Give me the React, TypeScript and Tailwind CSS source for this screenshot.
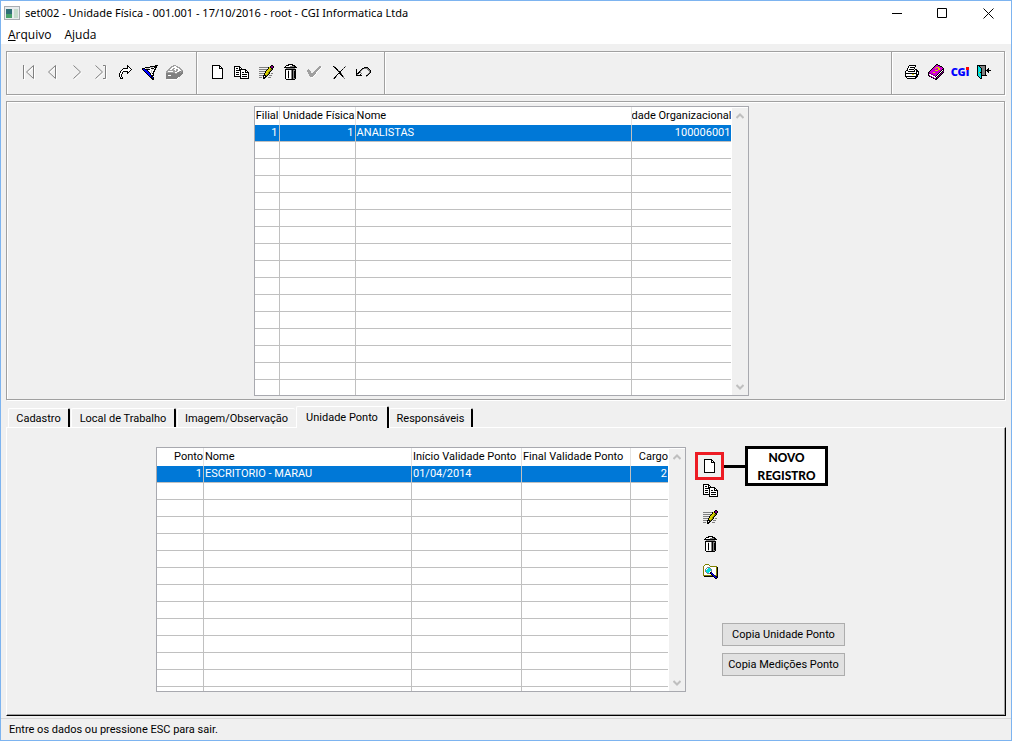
import { useState, type ReactNode } from "react";

const PALETTE: Record<string, string> = {
  k: "#000000",
  w: "#ffffff",
  g: "#808080",
  s: "#a0a0a0",
  l: "#c0c0c0",
  y: "#d8d000",
  o: "#808000",
  p: "#800080",
  m: "#d000d0",
  b: "#0000ff",
  n: "#000080",
  c: "#00e0e0",
  r: "#ff0000",
};

// 1 character = 1 pixel, "." is transparent
const NEW_DOC = [
  "kkkkkkkk...",
  "kwwwwwwkk..",
  "kwwwwwwkwk.",
  "kwwwwwwkkkk",
  "kwwwwwwwwwk",
  "kwwwwwwwwwk",
  "kwwwwwwwwwk",
  "kwwwwwwwwwk",
  "kwwwwwwwwwk",
  "kwwwwwwwwwk",
  "kwwwwwwwwwk",
  "kwwwwwwwwwk",
  "kwwwwwwwwwk",
  "kkkkkkkkkkk",
];

const COPY = [
  "kkkkkk.........",
  "kwwwwkk........",
  "kwkkwkwk.......",
  "kwwwwkkkkkkk...",
  "kwkkkkkwwwwkk..",
  "kwwwwwkwwwwkwk.",
  "kwkkkwkwkkwkkkk",
  "kwwwwwkwwwwwwwk",
  "kwkkkwkwkkkkkwk",
  "kwwwwwkwwwwwwwk",
  "kkkkkkkwkkkkkwk",
  "......kwwwwwwwk",
  "......kkkkkkkkk",
];

const PENCIL = [
  "............kk.",
  "...........kppk",
  "gggggggggkykppk",
  ".........kyykk.",
  "ggggggggkyyook.",
  ".......kyyyok..",
  "ggggggkyyyok...",
  "......kyyok....",
  "gggggkyyyok.gg.",
  ".....kyyok.....",
  "ggggkkkok.ggg..",
  "....kwkk.......",
  "ggg.kkk..ggg...",
  "....kk.........",
];

const TRASH = [
  "....kkkkk....",
  "..kkkwwwkkk..",
  ".kwwwwggggkk.",
  "kkkkkkkkkkkkk",
  "..ggggggggg..",
  ".kkkkkkkkkkk.",
  ".kwwlwwgkggk.",
  ".kwwkwwgkgkk.",
  ".kwwkwwgkgkk.",
  ".kwwkwwgkgkk.",
  ".kwwkwwgkgkk.",
  ".kwwkwwgkgkk.",
  ".kwwkwwgkgkk.",
  ".kwwkwwgkgkk.",
  ".kwwlwwgkggk.",
  "..kkkkkkkkk..",
];

const CHECK = [
  "............ss.",
  "...........sssw",
  "..........sssw.",
  ".s.......sssw..",
  "sss.....sssw...",
  "ssss...sssw....",
  ".sss..sssw.....",
  ".ssssssssw.....",
  "..ssssssw......",
  "..sssssw.......",
  "...sssw........",
  "....ww.........",
];

const CROSS = [
  "kg..........g",
  ".kk........k.",
  "..kk......g..",
  "...kk....k...",
  "....kg..k....",
  ".....kkk.....",
  "......kk.....",
  ".....kkkg....",
  "....k..kk....",
  "...k....kk...",
  "..kg.....kg..",
  ".kk.......g..",
  "gk.........g.",
];

const UNDO = [
  "........kkkk...",
  "......kkggggk..",
  "k....kg....ggk.",
  "k...kg......ggk",
  "k..kg........gk",
  "k.kkg........gk",
  "kkk..g......gk.",
  "kg..k......gk..",
  "kkkkkk....kk...",
  "..........g....",
];

const REDO = [
  "........k....",
  "........kk...",
  "........kwk..",
  "....kkkkkwwk.",
  "...kwwwwwwwwk",
  "..kwwwwwwwwk.",
  ".kwwkkkkkwk..",
  ".kwk....kk...",
  "kwwk....k....",
  "kwk..........",
  "kwk..........",
  "kwk..........",
  ".kwk.........",
  ".kkk.........",
];

const FUNNEL = [
  ".............kkk",
  "........kkkkkkk.",
  "...kkkkklllwkkk.",
  "kkkwlllwwkkkwk..",
  "kbbkkkkkwwlwkk..",
  ".kbbbkwwwlwwk...",
  "..kbbbkwwlwkk...",
  "...kbbbkwlwk....",
  "....kbbbkwkk....",
  ".....kbbkwwk....",
  "......kbbkkk....",
  ".......kbkk.....",
  "........kkbk....",
  ".........kkk....",
  "..........kk....",
];

const BOX = [
  ".......sss.......",
  ".....ssswwss.....",
  "....sswwwwwsss...",
  "...sswwsswwwwss..",
  "..sswwsswwsswwss.",
  ".sssssssswsswwwss",
  "sswwwwwsssswwsgsg",
  "ssssssssswwsggsgg",
  "gggggggggssgggggg",
  "gggggggggggggggg.",
  "ggwwwgggggggggg..",
  "gggggggggggggg...",
  "ggggggggggggw....",
  "gggggggggggw.....",
  ".wwwwwwwwww......",
];

const PRINTER = [
  "....kkkkkkk...",
  "...kwwwwwwk...",
  "...kwkkkkk....",
  "..kwwwwwwk....",
  "..kwkkkkk.kk..",
  ".kkwwwwwwkwkk.",
  "kwwkkkkkkkwkkk",
  "kwwwwwwwwwwkwk",
  "kkkkkkkkkkkkwk",
  "kwwwwwwyywwkkk",
  "kwwwwwwwwwwkk.",
  "kkkkkkkkkkkkk.",
  ".kwwwwwwwwkk..",
  "..kkkkkkkkk...",
];

const BOOK = [
  "........kk......",
  ".......kmmkk....",
  "......kmmmmmkk..",
  ".....kmmyyymmmk.",
  "....kmmymmyymmmk",
  "...kmmmmmmyymmkk",
  "..kmmmmyyymmmkwk",
  ".kmmmmmmmmmmkwkp",
  "kpmmmyymmmmkwkpk",
  "kppmmmmmmmkwkpk.",
  "kwwppmmmmkwkpk..",
  "kpwwwppmkwkpk...",
  ".kppwwwkwkpk....",
  "...kppwwkpk.....",
  ".....kppkk......",
  ".......kk.......",
];

const DOOR = [
  "kkkkkkkkk......",
  "kckgggggk......",
  "kcckggggk......",
  "kccckgggk..k...",
  "kccckgggk.kk...",
  "kccckgggkkkkkk.",
  "kccckgggk.kk...",
  "kcykkgggk..k...",
  "kccckgggk......",
  "kccckgggk......",
  "kccckkkkkk.....",
  ".kcck..........",
  "..kck..........",
  "...kk..........",
];

const SEARCH = [
  "..oooo.........",
  ".owwwwo........",
  "owwwwwwooooooo.",
  "owwwgggwwwwwwok",
  "owwgwccgwwwwwok",
  "owgwccccgwwwwok",
  "owgcccccgwwwwok",
  "owgccccwgwwwwok",
  "owwgccwknwwwwok",
  "owwwgggkbnwwwok",
  "owwwwwwwkbnwwok",
  "oooooooookbnook",
  ".kkkkkkkkkkbnkk",
  "...........kbnk",
  "............kk.",
];

const TABS = [
  { label: "Cadastro", width: "w-[62px]" },
  { label: "Local de Trabalho", width: "w-[105px]" },
  { label: "Imagem/Observação", width: "w-[118px]" },
  { label: "Unidade Ponto", width: "w-[93px]" },
  { label: "Responsáveis", width: "w-[84px]" },
];

type Column = { label: string; width: string; right?: boolean };

const UNIT_COLUMNS: Column[] = [
  { label: "Filial", width: "w-[25px]", right: true },
  { label: "Unidade Física", width: "w-[76px]", right: true },
  { label: "Nome", width: "w-[276px]" },
  { label: "dade Organizacional", width: "w-[99px]", right: true },
];

const POINT_COLUMNS: Column[] = [
  { label: "Ponto", width: "w-[47px]", right: true },
  { label: "Nome", width: "w-[208px]" },
  { label: "Início Validade Ponto", width: "w-[110px]" },
  { label: "Final Validade Ponto", width: "w-[109px]" },
  { label: "Cargo", width: "w-[37px]", right: true },
];

function Bitmap({ rows }: { rows: string[] }) {
  const width = Math.max(...rows.map((row) => row.length));
  return (
    <svg width={width} height={rows.length} viewBox={`0 0 ${width} ${rows.length}`} shapeRendering="crispEdges" aria-hidden="true">
      {rows.flatMap((row, y) =>
        row.split("").map((char, x) =>
          char === "." ? null : <rect key={`${x}-${y}`} x={x} y={y} width="1" height="1" fill={PALETTE[char]} />,
        ),
      )}
    </svg>
  );
}

// Disabled arrows: grey stroke with a white stroke one pixel away
function Arrow({ d, width }: { d: string; width: number }) {
  return (
    <svg width={width} height="16" viewBox={`0 0 ${width} 16`} fill="none" aria-hidden="true">
      <path d={d} stroke="#fff" transform="translate(1 1)" />
      <path d={d} stroke="#808080" />
    </svg>
  );
}

function ToolButton({ label, children }: { label: string; children: ReactNode }) {
  return (
    <button type="button" aria-label={label} className="flex h-6 min-w-6 items-center justify-center">
      {children}
    </button>
  );
}

function Grid({ name, columns, values, rowCount, className }: {
  name: string;
  columns: Column[];
  values: string[];
  rowCount: number;
  className: string;
}) {
  return (
    <div className={`flex shrink-0 overflow-hidden border border-[#a8a9af] bg-white ${className}`}>
      <table aria-label={name} className="table-fixed border-separate border-spacing-0 self-start">
        <thead>
          <tr>
            {columns.map((col, i) => (
              <th
                key={col.label}
                className={`h-[18px] overflow-hidden p-0 font-normal leading-[18px] whitespace-nowrap ${col.width} ${col.right ? "text-right" : "pl-px text-left"} ${i < columns.length - 1 ? "border-r border-[#e3e3e3]" : ""}`}
              >
                {col.label}
              </th>
            ))}
          </tr>
        </thead>
        <tbody>
          {Array.from({ length: rowCount }, (_, r) => (
            <tr key={r} className={r === 0 ? "bg-[#0078d7] text-white" : ""}>
              {columns.map((col, i) => (
                <td
                  key={col.label}
                  className={`h-[17px] border-b border-[#c0c0c0] p-0 leading-4 whitespace-nowrap ${col.right ? "pr-px text-right" : "pl-px"} ${i < columns.length - 1 ? "border-r" : ""}`}
                >
                  {r === 0 ? values[i] : ""}
                </td>
              ))}
            </tr>
          ))}
        </tbody>
      </table>
      <div className="mt-px ml-px flex w-4 flex-col items-center justify-between bg-[#f0f0f0] py-1">
        <button type="button" aria-label="Rolar para cima">
          <svg width="8" height="8" viewBox="0 0 8 8" fill="none" stroke="#bfbfbf" strokeWidth="2">
            <path d="M.5 6L4 2.5l3.5 3.5" />
          </svg>
        </button>
        <button type="button" aria-label="Rolar para baixo">
          <svg width="8" height="8" viewBox="0 0 8 8" fill="none" stroke="#bfbfbf" strokeWidth="2">
            <path d="M.5 2L4 5.5 7.5 2" />
          </svg>
        </button>
      </div>
    </div>
  );
}

export default function App() {
  const [tab, setTab] = useState(3);

  const etched = "border border-[#a0a0a0] shadow-[inset_1px_1px_#fff,1px_1px_#fff]";
  const pushButton = "h-[23px] w-[123px] border border-[#adadad] bg-[#e1e1e1] pt-[2px] whitespace-nowrap";

  return (
    <div className="flex min-h-screen flex-col border border-[#7db4f0] bg-[#f0f0f0] font-[Roboto,sans-serif] text-[11px] text-black">
      <header className="bg-white font-['Open_Sans',sans-serif] text-[12px]">
        <div className="flex h-6 items-center pl-[3px]">
          <svg width="16" height="14" viewBox="0 0 16 14" aria-hidden="true">
            <path d="M0 0h16v14H0z" fill="#a8adb2" />
            <path d="M1 1h14v12H1z" fill="#e8ecee" />
            <path d="M2 3h6v9H2z" fill="#2f6f78" />
            <path d="M2 8h6v4H2z" fill="#46a06a" />
            <path d="M10 3h4v9h-4z" fill="#c4dccc" />
          </svg>
          <h1 className="ml-[5px] flex-1 font-['Noto_Sans',sans-serif] text-[11px] whitespace-nowrap">
            set002 - Unidade Física - 001.001 - 17/10/2016 - root - CGI Informatica Ltda
          </h1>
          <div className="flex">
            <button type="button" aria-label="Minimizar" className="flex h-6 w-[45px] items-center justify-center">
              <svg width="11" height="11" viewBox="0 0 11 11" stroke="#000">
                <path d="M0 5.5h10" />
              </svg>
            </button>
            <button type="button" aria-label="Maximizar" className="flex h-6 w-[45px] items-center justify-center">
              <svg width="11" height="11" viewBox="0 0 11 11" stroke="#000" fill="none">
                <path d="M.5.5h9v9h-9z" />
              </svg>
            </button>
            <button type="button" aria-label="Fechar" className="flex h-6 w-[46px] items-center justify-center">
              <svg width="11" height="11" viewBox="0 0 11 11" stroke="#000">
                <path d="M.5.5l10 10M10.5.5l-10 10" />
              </svg>
            </button>
          </div>
        </div>
        <nav className="flex h-[19px] items-center gap-[13px] pl-[7px]">
          <button type="button"><u>A</u>rquivo</button>
          <button type="button">Ajuda</button>
        </nav>
      </header>

      <main className="flex flex-1 flex-col px-[5px] pt-[7px]">
        <div className={`mr-px flex h-11 items-stretch ${etched}`}>
          <div className="flex w-[190px] items-center border-r border-[#a0a0a0] pb-[2px] pl-[9px]">
            <div className="grid w-[171px] grid-cols-7">
              <ToolButton label="Primeiro">
                <Arrow width={13} d="M1.5 1v14M11.5 1.5v13L4.5 8z" />
              </ToolButton>
              <ToolButton label="Anterior">
                <Arrow width={9} d="M7.5 1.5v13L.5 8z" />
              </ToolButton>
              <ToolButton label="Próximo">
                <Arrow width={9} d="M.5 1.5L7.5 8l-7 6.5" />
              </ToolButton>
              <ToolButton label="Último">
                <Arrow width={13} d="M.5 1.5L7.5 8l-7 6.5M8 1.5h2.5v13H8" />
              </ToolButton>
              <ToolButton label="Ir para"><Bitmap rows={REDO} /></ToolButton>
              <ToolButton label="Filtro"><Bitmap rows={FUNNEL} /></ToolButton>
              <ToolButton label="Arquivar"><Bitmap rows={BOX} /></ToolButton>
            </div>
          </div>
          <div className="flex w-[188px] items-center border-r border-[#a0a0a0] pb-[2px] pl-2 shadow-[inset_1px_0_#fff,1px_0_#fff]">
            <div className="grid w-[171px] grid-cols-7">
              <ToolButton label="Novo"><Bitmap rows={NEW_DOC} /></ToolButton>
              <ToolButton label="Copiar"><Bitmap rows={COPY} /></ToolButton>
              <ToolButton label="Editar"><Bitmap rows={PENCIL} /></ToolButton>
              <ToolButton label="Excluir"><Bitmap rows={TRASH} /></ToolButton>
              <ToolButton label="Confirmar"><Bitmap rows={CHECK} /></ToolButton>
              <ToolButton label="Cancelar"><Bitmap rows={CROSS} /></ToolButton>
              <ToolButton label="Desfazer"><Bitmap rows={UNDO} /></ToolButton>
            </div>
          </div>
          <div className="flex-1" />
          <div className="flex w-[113px] items-center border-l border-[#a0a0a0] pb-[2px] pl-2 shadow-[inset_1px_0_#fff]">
            <ToolButton label="Imprimir"><Bitmap rows={PRINTER} /></ToolButton>
            <ToolButton label="Manual"><Bitmap rows={BOOK} /></ToolButton>
            <button type="button" className="flex h-6 w-6 items-center justify-center font-['Noto_Sans',sans-serif] text-[11px] font-black text-[#0000ff]">
              CG
              <span className="relative">
                i
                <span className="absolute top-[3px] left-0 h-[3px] w-[3px] bg-[#ff0000]" />
              </span>
            </button>
            <ToolButton label="Sair"><Bitmap rows={DOOR} /></ToolButton>
          </div>
        </div>

        <section className={`mt-[6px] mr-px flex justify-center pt-1 pr-2 pb-[3px] ${etched}`}>
          <Grid
            name="Unidades físicas"
            columns={UNIT_COLUMNS}
            values={["1", "1", "ANALISTAS", "100006001"]}
            rowCount={16}
            className="h-[290px]"
          />
        </section>

        <div role="tablist" className="mt-[6px] flex h-[21px] items-end pl-[2px]">
          {TABS.map((item, i) => (
            <button
              key={item.label}
              type="button"
              role="tab"
              aria-selected={i === tab}
              onClick={() => setTab(i)}
              className={`rounded-t-[2px] border-t border-l border-white pt-[2px] whitespace-nowrap ${item.width} ${i === tab ? "z-10 -mb-px h-[22px] bg-[#f0f0f0]" : "mr-px h-[19px]"} ${i === tab - 1 ? "mr-0" : "border-r-2 border-r-black"}`}
            >
              {item.label}
            </button>
          ))}
        </div>

        <section
          role="tabpanel"
          className="flex flex-1 items-start border-t border-r border-b border-l border-t-white border-r-black border-b-black border-l-white pt-[18px] pb-3 pl-[149px] shadow-[inset_-1px_-1px_#a0a0a0]"
        >
          <Grid
            name="Unidade ponto"
            columns={POINT_COLUMNS}
            values={["1", "ESCRITORIO - MARAU", "01/04/2014", "", "2"]}
            rowCount={14}
            className="mt-px h-[245px]"
          />
          <div className="ml-[9px]">
            <div className="flex h-10 items-center">
              <button type="button" aria-label="Novo registro" className="flex h-7 w-[29px] items-center justify-center border-3 border-[#ed1c24]">
                <Bitmap rows={NEW_DOC} />
              </button>
              <div className="h-[3px] w-[21px] bg-black" />
              <div className="h-10 w-[83px] border-3 border-black bg-white text-center font-[Carlito,Lato,sans-serif] text-[14px] leading-[18px] font-bold">
                NOVO
                <br />
                REGISTRO
              </div>
            </div>
            <div className="-mt-2 flex w-[31px] flex-col items-center gap-[3px]">
              <ToolButton label="Copiar registro"><Bitmap rows={COPY} /></ToolButton>
              <ToolButton label="Editar registro"><Bitmap rows={PENCIL} /></ToolButton>
              <ToolButton label="Excluir registro"><Bitmap rows={TRASH} /></ToolButton>
              <ToolButton label="Consultar registro"><Bitmap rows={SEARCH} /></ToolButton>
            </div>
            <div className="mt-10 ml-[27px] flex flex-col gap-[7px]">
              <button type="button" className={pushButton}>Copia Unidade Ponto</button>
              <button type="button" className={pushButton}>Copia Medições Ponto</button>
            </div>
          </div>
        </section>
      </main>

      <footer className="mt-[2px] h-[22px] border-t border-[#d7d7d7] pl-2 leading-[22px]">
        Entre os dados ou pressione ESC para sair.
      </footer>
    </div>
  );
}
